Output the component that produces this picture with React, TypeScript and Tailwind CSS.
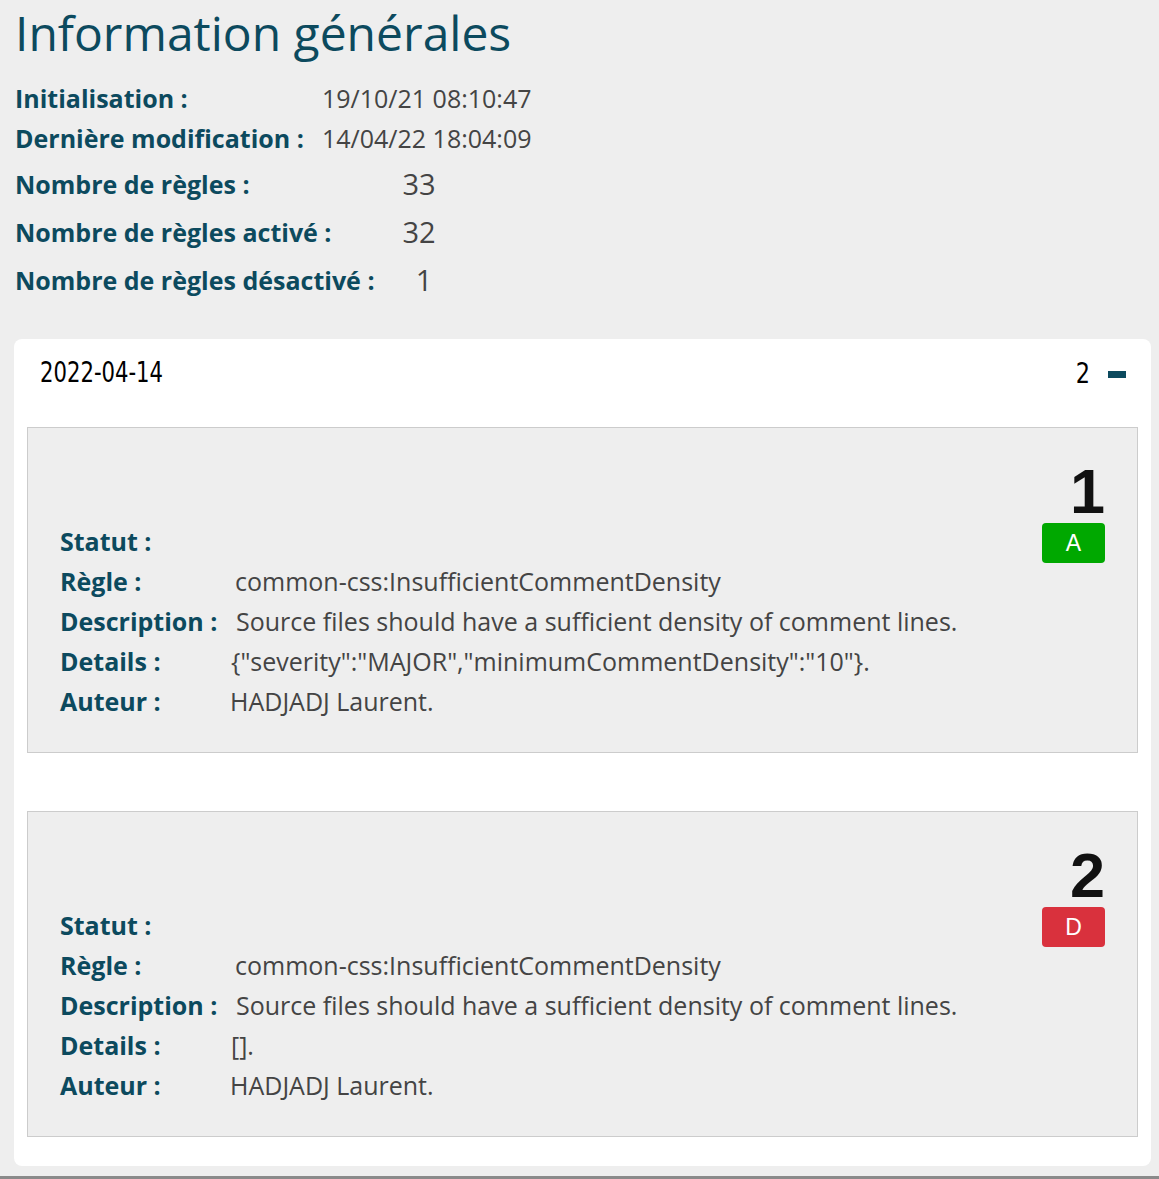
import React from "react";

type Rule = {
  num: number;
  status: "A" | "D";
  regle: string;
  description: string;
  details: string;
};

const rules: Rule[] = [
  {
    num: 1,
    status: "A",
    regle: "common-css:InsufficientCommentDensity",
    description: "Source files should have a sufficient density of comment lines.",
    details: '{"severity":"MAJOR","minimumCommentDensity":"10"}.',
  },
  {
    num: 2,
    status: "D",
    regle: "common-css:InsufficientCommentDensity",
    description: "Source files should have a sufficient density of comment lines.",
    details: "[].",
  },
];

function RuleBox({ rule }: { rule: Rule }) {
  return (
    <div className="bg-[#eeeeee] border border-[#cccccc] pt-[32px] pb-[31px] px-[32px]">
      {/* number */}
      <div className="flex justify-end">
        <span className="font-['Liberation_Sans',sans-serif] font-bold text-[63px] leading-none text-[#111]">
          {rule.num}
        </span>
      </div>
      <div className="flex justify-between items-start -mt-[2px]">
        <div className="text-[25px] leading-[40px]">
          <div className="flex">
            <span className="w-[170px] font-bold text-[#0c4a5e]">Statut :</span>
          </div>
          <div className="flex">
            <span className="w-[170px] font-bold text-[#0c4a5e]">Règle :</span>
            <span className="ml-[5px] text-[#444]">{rule.regle}</span>
          </div>
          <div className="flex">
            <span className="w-[170px] font-bold text-[#0c4a5e] whitespace-nowrap">Description :</span>
            <span className="ml-[6px] text-[#444]">{rule.description}</span>
          </div>
          <div className="flex">
            <span className="w-[170px] font-bold text-[#0c4a5e]">Details :</span>
            <span className="ml-[1px] text-[#444]">{rule.details}</span>
          </div>
          <div className="flex">
            <span className="w-[170px] font-bold text-[#0c4a5e]">Auteur :</span>
            <span className="text-[#444]">HADJADJ Laurent.</span>
          </div>
        </div>
        <div
          className={
            rule.status === "A"
              ? "mt-[2px] w-[63px] h-[40px] rounded-[4px] bg-[#00a800] text-white flex items-center justify-center text-[23px] font-['Liberation_Sans',sans-serif]"
              : "mt-[2px] w-[63px] h-[40px] rounded-[4px] bg-[#d9313d] text-white flex items-center justify-center text-[23px] font-['Liberation_Sans',sans-serif]"
          }
        >
          {rule.status}
        </div>
      </div>
    </div>
  );
}

export default function App() {
  return (
    <div className="bg-[#eeeeee] font-['Open_Sans',sans-serif] pb-[10px] border-b-[3px] border-[#8a8a8a]">
      <div className="px-[15px]">
        <h1 className="text-[48px] leading-[66px] text-[#0c4a5e]">Information générales</h1>

        {/* Dates */}
        <div className="mt-[12px] text-[25px] leading-[40px]">
          <div className="flex">
            <span className="w-[307px] font-bold text-[#0c4a5e]">Initialisation :</span>
            <span className="text-[#444]">19/10/21 08:10:47</span>
          </div>
          <div className="flex">
            <span className="w-[307px] font-bold text-[#0c4a5e]">Dernière modification :</span>
            <span className="text-[#444]">14/04/22 18:04:09</span>
          </div>
        </div>

        {/* Counters */}
        <div className="mt-[2px] text-[25px] leading-[48px]">
          <div className="flex items-center">
            <span className="w-[386px] font-bold text-[#0c4a5e]">Nombre de règles :</span>
            <span className="w-[36px] text-center text-[29px] text-[#444]">33</span>
          </div>
          <div className="flex items-center">
            <span className="w-[386px] font-bold text-[#0c4a5e]">Nombre de règles activé :</span>
            <span className="w-[36px] text-center text-[29px] text-[#444]">32</span>
          </div>
          <div className="flex items-center">
            <span className="w-[386px] font-bold text-[#0c4a5e]">Nombre de règles désactivé :</span>
            <span className="w-[36px] ml-[5px] text-center text-[29px] text-[#444]">1</span>
          </div>
        </div>
      </div>

      {/* Card */}
      <div className="mt-[35px] ml-[14px] mr-[8px] bg-white rounded-[8px] px-[13px] pb-[29px]">
        <div className="h-[88px] flex items-start justify-between pt-[12px]">
          <span className="ml-[13px] inline-block origin-left scale-x-[0.73] font-['DejaVu_Sans',sans-serif] text-[29px] text-black">
            2022-04-14
          </span>
          <div className="flex items-center gap-[16px] mr-[12px] mt-[2px]">
            <span className="inline-block scale-x-[0.8] font-['DejaVu_Sans',sans-serif] text-[28px] text-black">2</span>
            <span className="w-[18px] h-[7px] bg-[#0c4a5e]" />
          </div>
        </div>
        <div className="flex flex-col gap-[58px]">
          {rules.map((r) => (
            <RuleBox key={r.num} rule={r} />
          ))}
        </div>
      </div>
    </div>
  );
}
